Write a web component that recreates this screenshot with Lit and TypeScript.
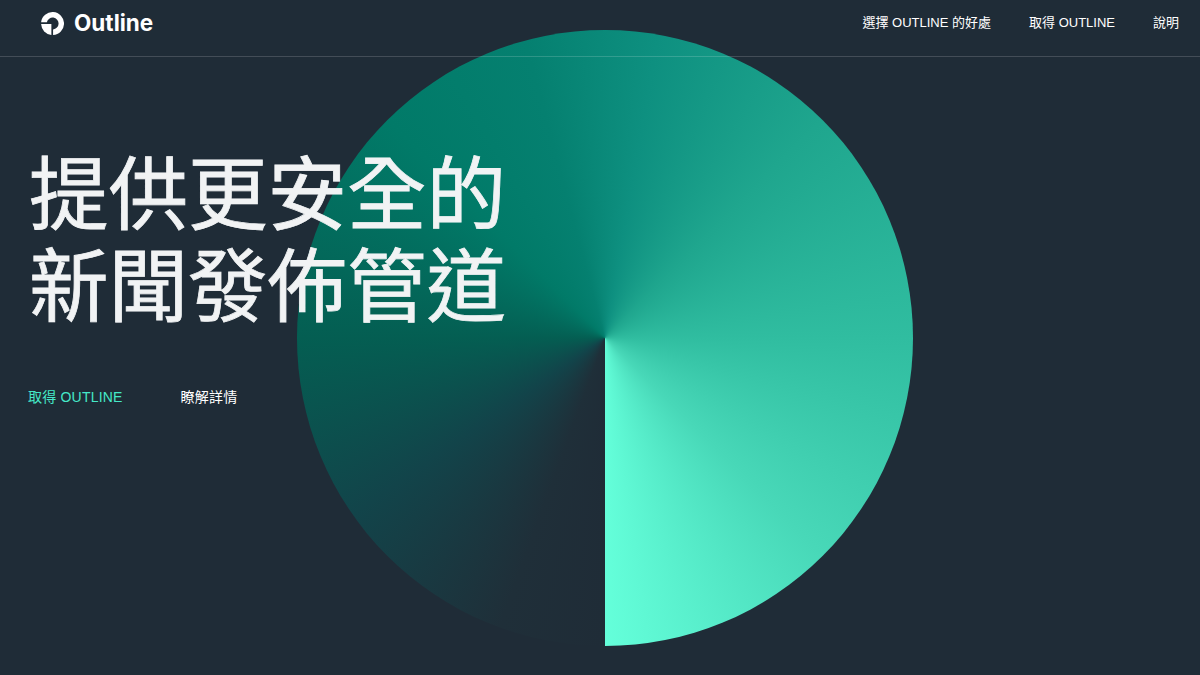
import { LitElement, html, css } from "lit";
import { customElement } from "lit/decorators.js";

@customElement("app-root")
export class AppRoot extends LitElement {
  static styles = css`
    :host {
      display: block;
      position: relative;
      width: 1200px;
      height: 675px;
      overflow: hidden;
      background: #1f2c37;
      font-family: "Liberation Sans", "Noto Sans CJK TC", sans-serif;
      color: #fff;
    }
    .disc {
      position: absolute;
      left: 297px;
      top: 30px;
      width: 616px;
      height: 616px;
      border-radius: 50%;
      background: conic-gradient(
        from 180deg,
        #1f2c37 0deg,
        #1f2f39 20deg,
        #12444a 55deg,
        #045e52 90deg,
        #017a68 135deg,
        #058070 165deg,
        #0e9080 190deg,
        #1fa68e 225deg,
        #30bda0 270deg,
        #48d8b8 315deg,
        #64ffda 360deg
      );
    }
    .content {
      position: relative;
      display: flex;
      flex-direction: column;
    }
    header {
      height: 57px;
      box-sizing: border-box;
      border-bottom: 1px solid rgba(255, 255, 255, 0.16);
      display: flex;
      align-items: center;
      justify-content: space-between;
      padding: 0 21px 11px 41px;
    }
    .logo {
      display: flex;
      align-items: center;
      gap: 10px;
      font-family: Inter, sans-serif;
      font-weight: 700;
      font-size: 22.5px;
      line-height: 26px;
      padding-top: 1px;
    }
    .logo svg {
      width: 23px;
      height: 23px;
      display: block;
    }
    nav {
      display: flex;
      gap: 38px;
      font-size: 13px;
      line-height: 18px;
    }
    h1 {
      margin: 93px 0 0 29px;
      font-weight: 400;
      font-size: 79.5px;
      line-height: 92px;
      color: #f1f3f4;
      -webkit-text-stroke: 0.8px #f1f3f4;
    }
    .cta {
      display: flex;
      gap: 58px;
      margin: 53px 0 0 28px;
      font-size: 14px;
      line-height: 20px;
      letter-spacing: 0.2px;
    }
    .cta .primary {
      color: #45e8c8;
    }
  `;

  render() {
    return html`
      <div class="disc"></div>
      <div class="content">
        <header>
          <div class="logo">
            <svg viewBox="0 0 24 24" aria-hidden="true">
              <path
                fill="#fff"
                d="M.1 10.6A12 12 0 1 1 12.6 24v-5.8a6.2 6.2 0 1 0-6.5-7.6Z"
              />
              <path fill="#fff" d="M.1 12.6H10.8V23.9A12 12 0 0 1 .1 12.6Z" />
            </svg>
            <span>Outline</span>
          </div>
          <nav>
            <span>選擇 OUTLINE 的好處</span>
            <span>取得 OUTLINE</span>
            <span>說明</span>
          </nav>
        </header>
        <h1>提供更安全的<br />新聞發佈管道</h1>
        <div class="cta">
          <span class="primary">取得 OUTLINE</span>
          <span>瞭解詳情</span>
        </div>
      </div>
    `;
  }
}
